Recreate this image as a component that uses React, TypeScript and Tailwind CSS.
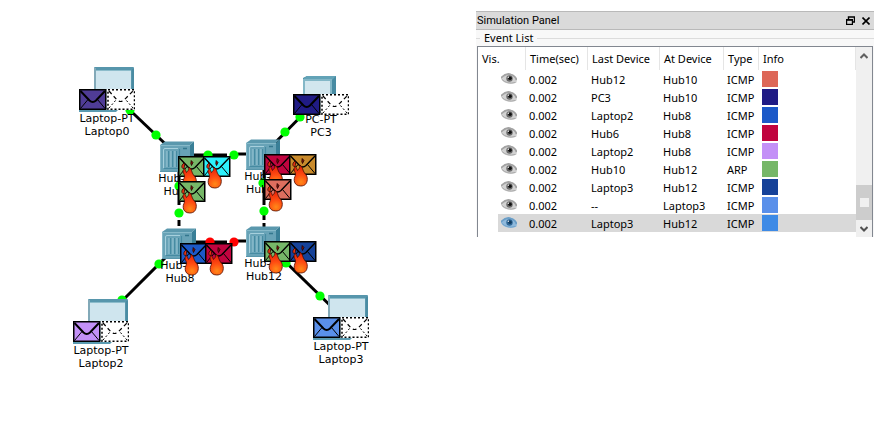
import React from "react";

const TEXT = "font-['DejaVu_Sans',Verdana,sans-serif]";

type Ports = [number, number, number, number];

const links: Ports[] = [
  [115, 96, 177, 155],
  [190, 155, 227, 155],
  [238, 154, 248, 154],
  [263, 155, 320, 97],
  [179, 170, 179, 205],
  [179, 209, 179, 217],
  [179, 220, 179, 226],
  [264, 170, 264, 205],
  [264, 208, 264, 220],
  [264, 223, 264, 230],
  [192, 242, 227, 242],
  [236, 241, 248, 241],
  [179, 244, 108, 315],
  [263, 240, 341, 316],
];

const lights: { x: number; y: number; down?: boolean }[] = [
  { x: 130, y: 110 },
  { x: 156, y: 135 },
  { x: 208, y: 155 },
  { x: 234, y: 155 },
  { x: 300, y: 117 },
  { x: 285, y: 132 },
  { x: 179, y: 186 },
  { x: 179, y: 213 },
  { x: 263, y: 183 },
  { x: 264, y: 211 },
  { x: 210, y: 242, down: true },
  { x: 234, y: 242, down: true },
  { x: 159, y: 264 },
  { x: 122, y: 300 },
  { x: 286, y: 263 },
  { x: 320, y: 296 },
];

function Links() {
  return (
    <svg className="absolute left-0 top-0" width="400" height="400" aria-hidden="true">
      {links.map(([x1, y1, x2, y2], i) => (
        <line key={i} x1={x1} y1={y1} x2={x2} y2={y2} stroke="#000" strokeWidth="3" />
      ))}
      {lights.map((l, i) => (
        <circle key={i} cx={l.x} cy={l.y} r="4.6" fill={l.down ? "#ff0000" : "#00ff00"} />
      ))}
    </svg>
  );
}

function Envelope({ color, fire, empty }: { color?: string; fire?: boolean; empty?: boolean }) {
  return (
    <svg width="28" height="34" viewBox="0 0 28 34" aria-hidden="true">
      {empty ? (
        <>
          <rect x="0" y="0" width="28" height="21" fill="#fff" />
          <rect x="1" y="0.75" width="26.5" height="19.500" fill="none" stroke="#000" strokeWidth="1.500" strokeDasharray="2 2" />
          <path d="M2 2 L10 11 Q13.500 14 17 11 L26 2" fill="none" stroke="#000" strokeWidth="1.2" strokeDasharray="4 3" />
          <path d="M2 19 L9 11 M26 19 L19 11" stroke="#000" strokeWidth="1" strokeDasharray="2 2" />
        </>
      ) : (
        <>
          <rect x="0.75" y="0.75" width="26" height="19.500" fill={color} stroke="#000" strokeWidth="1.500" />
          <path d="M1.500 2 L10.500 11.500 Q13.700 14.500 17 11.500 L26 2" fill="none" stroke="#000" strokeWidth={fire ? 1.4 : 2} />
          <path d="M1.500 19.500 L9 10.500 M26 19.500 L18.500 10.500" stroke="#000" strokeWidth="1" />
        </>
      )}
      {fire && (
        <>
          <path
            d="M11 11 C14 13 13.500 16.500 15.500 19 C17.500 21 18.500 23 18.300 25.500 C18 30 15.500 32 11.800 32 C8 32 5.500 30 5.200 26.500 C4.800 23.500 7 21.500 6.500 19.500 C6.300 18 4.800 17 5 14.500 L6.500 12.500 C7.500 13.500 7.500 15 8.500 16.500 C9.500 15 11.500 14 11 11 Z"
            fill="url(#flame)"
            stroke="#4a0c00"
            strokeWidth="0.8"
          />
          <path d="M6 7 C4 8.500 3.500 10 4 11.500 L5.500 13 C6.500 11.500 7 9 6 7 Z" fill="#e63312" stroke="#2a0500" strokeWidth="0.8" />
          <path d="M13.200 4.500 L15 6.500 L13.500 9.500 L12.800 7.500 Z" fill="#7c1208" stroke="#200" strokeWidth="0.8" />
        </>
      )}
    </svg>
  );
}

function Packet({ place, color, fire, empty }: { place: string; color?: string; fire?: boolean; empty?: boolean }) {
  return (
    <div className={`absolute ${place}`}>
      <Envelope color={color} fire={fire} empty={empty} />
    </div>
  );
}

function Laptop() {
  return (
    <svg width="56" height="46" viewBox="0 0 56 46" aria-hidden="true">
      <path d="M0 43 H39 L37 45 H0 Z" fill="#5b9bb1" />
      <rect x="15" y="0" width="40" height="42" rx="1" fill="#5796ac" />
      <path d="M15 1 h2 v40 h-2 z" fill="#82a9b8" />
      <path d="M53 2 h2 v40 h-2 z" fill="#4a8ca3" />
      <rect x="17" y="3" width="35" height="38" fill="#cfe5ee" />
      <path d="M17 3.500 H52" stroke="#8cbccb" />
    </svg>
  );
}

function Desktop() {
  return (
    <svg width="56" height="46" viewBox="0 0 56 46" aria-hidden="true">
      <path d="M10 6 L14 4 H43 V40 H10 Z" fill="#478ba2" />
      <path d="M10 7 L14 4 H43 L39 8 H10 Z" fill="#63a3b7" />
      <rect x="10" y="7" width="29" height="34" fill="#83b7c7" />
      <rect x="12" y="9" width="25" height="30" fill="#d2e6ee" />
    </svg>
  );
}

function Hub() {
  return (
    <svg width="34" height="32" viewBox="0 0 34 32" aria-hidden="true">
      <path d="M0 4 L5 0.500 H34 L30 4 Z" fill="#5a98ad" />
      <path d="M30 4 L34 0.500 V25 L30 31 Z" fill="#397f97" />
      <rect x="0" y="4" width="30" height="27" fill="#68a3b7" />
      <path d="M0.500 31 V4.500 H30" fill="none" stroke="#86b9c9" />
      <path d="M0 30.500 H30" stroke="#5896ab" />
      <path d="M3.500 27 V9 Q3.500 7.500 5 7.500 H18" fill="none" stroke="#a6d0dd" strokeWidth="1" />
      <path d="M7 26 V10 M11 26 V10 M15 26 V10" stroke="#95c4d2" strokeWidth="1.200" />
      <path d="M8.500 26 V10 M12.500 26 V10 M16.500 26 V10 M19.500 27 V8 M4 27.500 H20" stroke="#468ba2" strokeWidth="1.200" />
      <path d="M23 7.500 h4" stroke="#33778e" strokeWidth="1.500" />
    </svg>
  );
}

function Label({ place, model, name }: { place: string; model: string; name: string }) {
  return (
    <div className={`absolute w-16 text-center text-[11px] leading-[13px] whitespace-nowrap text-black ${TEXT} ${place}`}>
      <p>{model}</p>
      <p>{name}</p>
    </div>
  );
}

function Topology() {
  return (
    <main className="relative h-[400px] min-w-[400px] flex-1" aria-label="Network topology">
      <svg className="absolute" width="0" height="0" aria-hidden="true">
        <defs>
          <radialGradient id="flame" gradientUnits="userSpaceOnUse" cx="12" cy="28" r="14">
            <stop offset="0" stopColor="#ff8a18" />
            <stop offset="0.5" stopColor="#ff4d12" />
            <stop offset="1" stopColor="#ec2a0a" />
          </radialGradient>
        </defs>
      </svg>
      <Links />

      <div className="absolute left-[79px] top-[67px]"><Laptop /></div>
      <div className="absolute left-[73px] top-[299px]"><Laptop /></div>
      <div className="absolute left-[313px] top-[295px]"><Laptop /></div>
      <div className="absolute left-[293px] top-[72px]"><Desktop /></div>
      <div className="absolute left-[160px] top-[141px]"><Hub /></div>
      <div className="absolute left-[246px] top-[139px]"><Hub /></div>
      <div className="absolute left-[162px] top-[228px]"><Hub /></div>
      <div className="absolute left-[246px] top-[226px]"><Hub /></div>

      <Label place="left-[75px] top-[112px]" model="Laptop-PT" name="Laptop0" />
      <Label place="left-[289px] top-[113px]" model="PC-PT" name="PC3" />
      <Label place="left-[69px] top-[344px]" model="Laptop-PT" name="Laptop2" />
      <Label place="left-[309px] top-[340px]" model="Laptop-PT" name="Laptop3" />
      <Label place="left-[146px] top-[172px]" model="Hub-PT" name="Hub6" />
      <Label place="left-[232px] top-[170px]" model="Hub-PT" name="Hub10" />
      <Label place="left-[148px] top-[259px]" model="Hub-PT" name="Hub8" />
      <Label place="left-[232px] top-[257px]" model="Hub-PT" name="Hub12" />

      <Packet place="left-[79px] top-[89px]" color="#4f3c96" />
      <Packet place="left-[107px] top-[89px]" empty />
      <Packet place="left-[293px] top-[94px]" color="#201b85" />
      <Packet place="left-[321px] top-[94px]" empty />
      <Packet place="left-[73px] top-[321px]" color="#c390f7" />
      <Packet place="left-[101px] top-[321px]" empty />
      <Packet place="left-[313px] top-[317px]" color="#5a90ea" />
      <Packet place="left-[341px] top-[317px]" empty />

      <Packet place="left-[178px] top-[156px]" color="#76b768" fire />
      <Packet place="left-[203px] top-[156px]" color="#2df0fb" fire />
      <Packet place="left-[178px] top-[181px]" color="#76b768" fire />
      <Packet place="left-[264px] top-[154px]" color="#c0043f" fire />
      <Packet place="left-[289px] top-[154px]" color="#c98a2b" fire />
      <Packet place="left-[264px] top-[179px]" color="#dd6e5e" fire />
      <Packet place="left-[180px] top-[243px]" color="#1c59c8" fire />
      <Packet place="left-[205px] top-[243px]" color="#c0043f" fire />
      <Packet place="left-[264px] top-[241px]" color="#76b768" fire />
      <Packet place="left-[289px] top-[241px]" color="#164299" fire />
    </main>
  );
}

function Eye({ active }: { active?: boolean }) {
  const lid = active ? "#6b9fc8" : "#a3a3a3";
  const white = active ? "#8fb9dc" : "#d2d2d2";
  const iris = active ? "#2f6796" : "#6a6a6a";
  return (
    <svg width="16" height="12" viewBox="0 0 16 12" role="img" aria-label="Visible">
      <path d="M0 4 Q5 -1 11 1.500 Q15 3 16 6.500 L15.500 9.500 Q10 12 5 10 Q2 9 0 6 Z" fill={white} />
      <path d="M0 5 Q5 -0.500 10 1.500 Q14.500 3 15.500 7" fill="none" stroke={lid} strokeWidth="1.800" />
      <path d="M1 6.500 Q6 11.500 14.500 9.500" fill="none" stroke={lid} strokeWidth="0.900" />
      <circle cx="8.500" cy="5.500" r="3.200" fill={iris} />
      <circle cx="9" cy="5.300" r="1.800" fill={active ? "#123c60" : "#111"} />
      <circle cx="7.300" cy="4.300" r="0.700" fill="#f2f2f2" />
    </svg>
  );
}

const events = [
  { last: "Hub12", at: "Hub10", type: "ICMP", color: "#dd6758" },
  { last: "PC3", at: "Hub10", type: "ICMP", color: "#201b85" },
  { last: "Laptop2", at: "Hub8", type: "ICMP", color: "#1c59c8" },
  { last: "Hub6", at: "Hub8", type: "ICMP", color: "#c0043f" },
  { last: "Laptop2", at: "Hub8", type: "ICMP", color: "#c390f7" },
  { last: "Hub10", at: "Hub12", type: "ARP", color: "#76b768" },
  { last: "Laptop3", at: "Hub12", type: "ICMP", color: "#164299" },
  { last: "--", at: "Laptop3", type: "ICMP", color: "#5a90ea" },
  { last: "Laptop3", at: "Hub12", type: "ICMP", color: "#3d8ae6" },
];

const columns = ["Vis.", "Time(sec)", "Last Device", "At Device", "Type", "Info"];

function EventTable() {
  return (
    <table className="w-full table-fixed border-separate border-spacing-0 text-left whitespace-nowrap">
      <colgroup>
        <col className="w-[48px]" />
        <col className="w-[62px]" />
        <col className="w-[72px]" />
        <col className="w-[64px]" />
        <col className="w-[35px]" />
        <col />
      </colgroup>
      <thead>
        <tr className="h-[23px]">
          {columns.map((c) => (
            <th key={c} scope="col" className="border-r border-[#e5e5e5] p-0 pl-1 font-normal">{c}</th>
          ))}
        </tr>
      </thead>
      <tbody>
        {events.map((e, i) => {
          const active = i === events.length - 1;
          const bg = active ? "bg-[#d9d9d9]" : "";
          return (
            <tr key={i} className="h-[18px]">
              <td className="p-0 pl-5">
                <span className={`flex h-[18px] items-center pl-[3px] ${bg}`}><Eye active={active} /></span>
              </td>
              <td className={`p-0 pt-px pl-[3px] ${bg}`}>0.002</td>
              <td className={`p-0 pt-px pl-[3px] ${bg}`}>{e.last}</td>
              <td className={`p-0 pt-px pl-[3px] ${bg}`}>{e.at}</td>
              <td className={`p-0 pt-px pl-[3px] ${bg}`}>{e.type}</td>
              <td className={`p-0 pl-[3px] ${bg}`}>
                <span className="block size-4" style={{ backgroundColor: e.color }} />
              </td>
            </tr>
          );
        })}
      </tbody>
    </table>
  );
}

function ScrollBar() {
  return (
    <div className="flex w-[16px] shrink-0 flex-col items-center bg-[#f0f0f0]">
      <button type="button" aria-label="Scroll up" className="flex h-[18px] w-full items-center justify-center">
        <svg width="8" height="6" viewBox="0 0 8 6"><path d="M0.500 5 L4 1.500 L7.500 5" fill="none" stroke="#606060" strokeWidth="2" /></svg>
      </button>
      <div className="flex-1" />
      <div className="flex h-[35px] w-full items-center justify-center bg-[#cdcdcd]">
        <span className="size-[9px] bg-[#f0f0f0]" />
      </div>
      <button type="button" aria-label="Scroll down" className="flex h-[17px] w-full items-center justify-center">
        <svg width="8" height="6" viewBox="0 0 8 6"><path d="M0.500 1 L4 4.500 L7.500 1" fill="none" stroke="#505050" strokeWidth="2" /></svg>
      </button>
    </div>
  );
}

function SimulationPanel() {
  return (
    <aside className="mt-[11px] mr-5 w-[398px] shrink-0 self-start bg-[#f8f8f8] font-['Noto_Sans','Segoe_UI',sans-serif] text-[11px] leading-4 text-black">
      <header className="flex h-[19px] items-center border-y border-[#b9b9b9] bg-[#dadada] pl-px">
        <h1 className="flex-1 font-[Roboto,sans-serif]">Simulation Panel</h1>
        <button type="button" aria-label="Restore" className="flex size-4 items-center justify-center">
          <svg width="9" height="9" viewBox="0 0 9 9"><path d="M2.500 3 V1 H8.500 V6 H6.500 M2 1 H9 M0 4 H7" fill="none" stroke="#000" strokeWidth="1.400" /><rect x="0.600" y="3.600" width="5.800" height="4.800" fill="none" stroke="#000" strokeWidth="1.200" /></svg>
        </button>
        <button type="button" aria-label="Close" className="flex size-4 items-center justify-center">
          <svg width="8" height="8" viewBox="0 0 8 8"><path d="M0.500 0.500 L7.500 7.500 M7.500 0.500 L0.500 7.500" stroke="#000" strokeWidth="1.600" /></svg>
        </button>
      </header>
      <section>
        <div className="flex h-4 items-center gap-1">
          <span className="h-px w-1 bg-[#dcdcdc]" />
          <h2>Event List</h2>
          <span className="h-px flex-1 bg-[#dcdcdc]" />
        </div>
        <div className="mx-px flex h-[191px] overflow-hidden border border-b-0 border-[#828790] bg-white">
          <div className="min-w-0 flex-1"><EventTable /></div>
          <ScrollBar />
        </div>
      </section>
    </aside>
  );
}

export default function App() {
  return (
    <div className="flex min-h-screen bg-white">
      <Topology />
      <SimulationPanel />
    </div>
  );
}
